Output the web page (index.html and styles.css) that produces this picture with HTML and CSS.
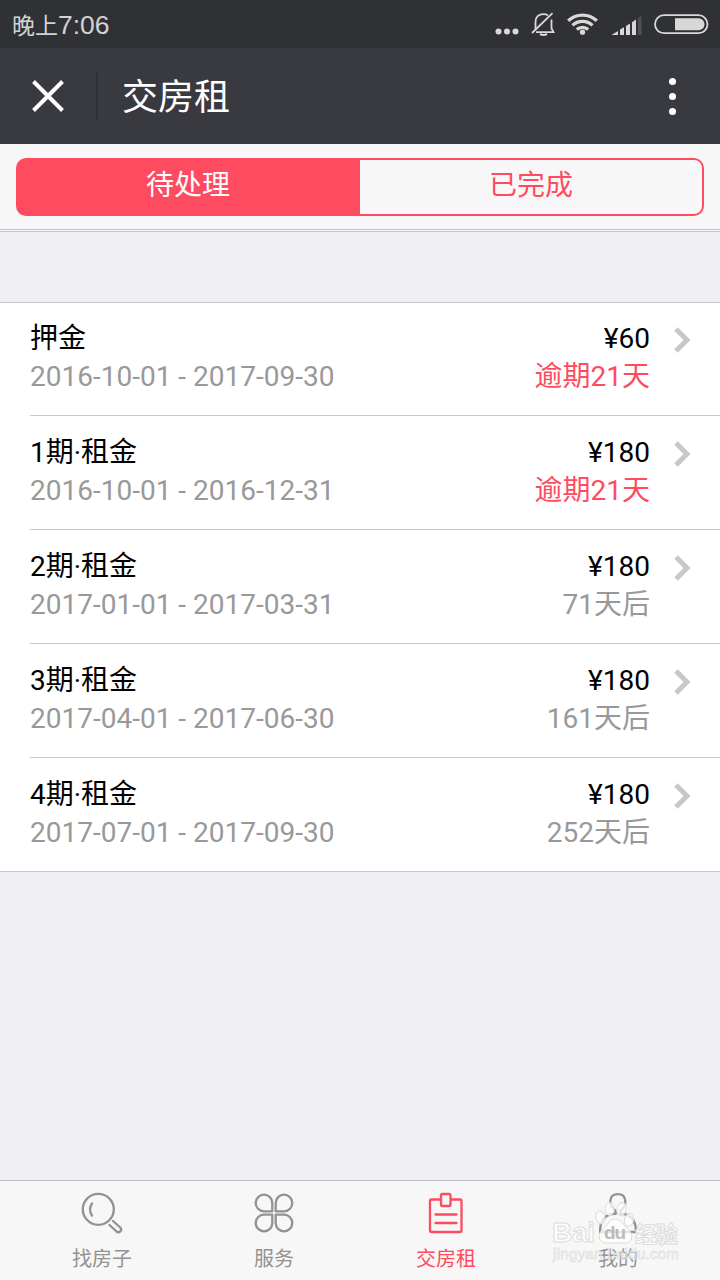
FILE: index.html
```html
<!DOCTYPE html>
<html lang="zh-CN">
  <head>
    <meta charset="UTF-8" />
    <meta name="viewport" content="width=device-width, initial-scale=1.0" />
    <title>交房租</title>
    <link rel="stylesheet" href="styles.css">
  </head>
  <body>
    <div class="status-bar">
      <div class="time"><span class="period">晚上</span>7:06</div>
      <svg class="status-icons" width="216" height="30" viewBox="0 0 216 30">
        <!-- more -->
        <g fill="#d8d8d8">
          <circle cx="2.5" cy="21.5" r="3" />
          <circle cx="11" cy="21.5" r="3" />
          <circle cx="19.5" cy="21.5" r="3" />
        </g>
        <!-- muted bell -->
        <g fill="none" stroke="#d8d8d8" stroke-width="1.8">
          <path d="M39.5 19.5V12C39.5 7 42.5 4.200 47.500 4.200Q50 4.200 52 5.500M55.500 9.500V18.500L57.500 22.200H40" />
          <path d="M36 23L56.500 3.200" />
          <path d="M44 24Q47.500 26 51 24" stroke-width="2.200" />
        </g>
        <!-- wifi -->
        <g fill="none" stroke="#d8d8d8" stroke-width="3.300">
          <path d="M72.200 10.700A21 21 0 0 1 100.800 10.700" />
          <path d="M76.500 15.400A14.500 14.500 0 0 1 96.500 15.400" />
          <path d="M80.800 19.500A8.500 8.500 0 0 1 92.200 19.500" />
          <circle cx="86.500" cy="22.200" r="2.600" fill="#d8d8d8" stroke="none" />
        </g>
        <!-- signal -->
        <g fill="#d8d8d8">
          <path d="M115.500 25L122 21V25ZM124 19.600L128 17.200V25H124ZM130 16L134 13.500V25H130ZM136 12.300L140 9.600V25H136Z" />
          <path d="M142 8.300L145.500 6V25H142Z" fill="#505154" />
        </g>
        <!-- battery -->
        <rect x="159" y="5.200" width="52.500" height="18" rx="9" fill="none" stroke="#d8d8d8" stroke-width="1.800" />
        <path d="M179 8.200H202.500A5.800 5.800 0 0 1 202.500 20.200H179Z" fill="#d8d8d8" />
      </svg>
    </div>

    <header class="nav-bar">
      <svg class="close" width="32" height="32" viewBox="0 0 32 32">
        <path d="M1.500 1.500L30.500 30.500M30.500 1.500L1.500 30.500" />
      </svg>
      <h1>交房租</h1>
      <div class="menu"><i></i><i></i><i></i></div>
    </header>

    <div class="tabs">
      <div class="segment">
        <a class="active">待处理</a>
        <a>已完成</a>
      </div>
    </div>

    <main>
      <ul class="bill-list">
        <li>
          <div class="info"><p>押金</p><p class="sub">2016-10-01 - 2017-09-30</p></div>
          <div class="amount"><p>¥60</p><p class="sub overdue">逾期21天</p></div>
          <svg class="arrow" viewBox="0 0 18 26"><path d="M2 2L13 13L2 24" /></svg>
        </li>
        <li>
          <div class="info"><p>1期·租金</p><p class="sub">2016-10-01 - 2016-12-31</p></div>
          <div class="amount"><p>¥180</p><p class="sub overdue">逾期21天</p></div>
          <svg class="arrow" viewBox="0 0 18 26"><path d="M2 2L13 13L2 24" /></svg>
        </li>
        <li>
          <div class="info"><p>2期·租金</p><p class="sub">2017-01-01 - 2017-03-31</p></div>
          <div class="amount"><p>¥180</p><p class="sub">71天后</p></div>
          <svg class="arrow" viewBox="0 0 18 26"><path d="M2 2L13 13L2 24" /></svg>
        </li>
        <li>
          <div class="info"><p>3期·租金</p><p class="sub">2017-04-01 - 2017-06-30</p></div>
          <div class="amount"><p>¥180</p><p class="sub">161天后</p></div>
          <svg class="arrow" viewBox="0 0 18 26"><path d="M2 2L13 13L2 24" /></svg>
        </li>
        <li>
          <div class="info"><p>4期·租金</p><p class="sub">2017-07-01 - 2017-09-30</p></div>
          <div class="amount"><p>¥180</p><p class="sub">252天后</p></div>
          <svg class="arrow" viewBox="0 0 18 26"><path d="M2 2L13 13L2 24" /></svg>
        </li>
      </ul>
    </main>

    <footer class="tab-bar">
      <a>
        <svg viewBox="0 0 44 44">
          <circle cx="18.300" cy="17.300" r="15.500" />
          <path d="M12 11.500Q8 17.500 12 23.500" />
          <path d="M29.500 33L36.500 39.500Q38.500 41 40.300 39.300T40.300 35.500L33 29" />
        </svg>
        <span>找房子</span>
      </a>
      <a>
        <svg viewBox="0 0 44 44">
          <path d="M20.300 19.300H11.800A8.300 8.300 0 1 1 20.300 11Z" />
          <path d="M23.700 19.300H32.200A8.300 8.300 0 1 0 23.700 11Z" />
          <path d="M20.300 22.700H11.800A8.300 8.300 0 1 0 20.300 31Z" />
          <path d="M23.700 22.700H32.200A8.300 8.300 0 1 1 23.700 31Z" />
        </svg>
        <span>服务</span>
      </a>
      <a class="active">
        <svg viewBox="0 0 44 44">
          <path d="M17 7.500H7.500Q6 7.500 6 9V38.500Q6 40 7.500 40H36Q37.500 40 37.500 38.500V9Q37.500 7.500 36 7.500H27" />
          <rect x="17" y="2" width="9.500" height="12" rx="1.500" />
          <path d="M11.500 22.500H32.500M11.500 31H32.500" />
        </svg>
        <span>交房租</span>
      </a>
      <a>
        <svg viewBox="0 0 44 44">
          <path d="M19.500 22V18.500C12 14 12.500 2.200 21.800 2.200S31.500 14 24.500 18.500V22" />
          <path d="M19.500 21.500C9 22 4 28 4 40H40C40 28 34 22 24.500 21.500" />
        </svg>
        <span>我的</span>
      </a>
      <svg class="watermark" width="140" height="80" viewBox="0 0 140 80">
        <g class="paw">
          <ellipse cx="50.500" cy="23.500" rx="4.500" ry="6.500" transform="rotate(-12 50.500 23.500)" />
          <ellipse cx="59.700" cy="15" rx="4.500" ry="6.500" />
          <ellipse cx="71.700" cy="15" rx="4.500" ry="6.500" transform="rotate(12 71.700 15)" />
          <ellipse cx="79" cy="26" rx="4.500" ry="6.500" transform="rotate(12 79 26)" />
          <path d="M65 25C71 25 73 31 78 35C84 40 83 49 75 49H56C48 49 47 40 53 35C58 31 59 25 65 25Z" />
        </g>
        <text x="2" y="48" font-size="28" textLength="43">Bai</text>
        <text class="du" x="54" y="45" font-size="19" textLength="22">du</text>
        <text x="85" y="47.500" font-size="22" textLength="43">经验</text>
        <text class="url" x="3" y="65" font-size="15" textLength="126">jingyan.baidu.com</text>
      </svg>
    </footer>
  </body>
</html>
```
FILE: styles.css
```css
* {
  box-sizing: border-box;
}

body {
  margin: 0;
  height: 1280px;
  display: flex;
  flex-direction: column;
  overflow: hidden;
  background-color: #efeff4;
  font-family: Roboto, "Noto Sans CJK SC", sans-serif;
  font-size: 28px;
  color: #000;
}

h1,
p,
ul {
  margin: 0;
  padding: 0;
}

.status-bar {
  height: 48px;
  padding: 0 8px 0 12px;
  display: flex;
  justify-content: space-between;
  background-color: #303135;
  color: #d3d3d3;
}

.time {
  font-family: "Liberation Sans", "Noto Sans CJK SC", sans-serif;
  font-size: 26.5px;
  line-height: 51px;
}

.period {
  font-size: 23px;
}

.status-icons {
  margin-top: 10px;
  width: 216px;
  overflow: visible;
}

.nav-bar {
  height: 96px;
  display: flex;
  align-items: center;
  background-color: #393a3f;
  color: #fff;
}

.close {
  margin: 0 32px;
  fill: none;
  stroke: #fff;
  stroke-width: 4;
}

h1 {
  flex: 1;
  height: 48px;
  padding-left: 24px;
  border-left: 2px solid #303135;
  font-size: 36px;
  font-weight: 400;
  line-height: 53px;
}

.menu {
  display: flex;
  flex-direction: column;
  gap: 8px;
  margin-right: 44px;
}

.menu i {
  width: 7px;
  height: 7px;
  border-radius: 50%;
  background-color: #fff;
}

.tabs {
  height: 88px;
  padding: 14px 16px 0;
  background-color: #f7f7f8;
  border-bottom: 3px double #c4c4c8;
}

.segment {
  display: flex;
  height: 58px;
}

.segment a {
  width: 50%;
  border: 2px solid #ff4b5f;
  border-left: none;
  border-radius: 0 10px 10px 0;
  text-align: center;
  line-height: 52px;
  color: #ff4b5f;
}

.segment .active {
  border: none;
  border-radius: 10px 0 0 10px;
  background-color: #ff4b5f;
  line-height: 56px;
  color: #fff;
}

main {
  flex: 1;
  padding-top: 70px;
}

.bill-list {
  list-style: none;
  background-color: #fff;
  border-top: 1px solid #c8c7cc;
  border-bottom: 1px solid #c8c7cc;
}

.bill-list li {
  display: flex;
  height: 114px;
  margin-left: 30px;
  padding: 18px 30px 0 0;
  border-bottom: 1px solid #c8c7cc;
  line-height: 38px;
}

.bill-list li:first-child {
  height: 113px;
  padding-top: 17px;
}

.bill-list li:last-child {
  height: 113px;
  border-bottom: none;
}

.info {
  flex: 1;
}

.amount {
  text-align: right;
}

.sub {
  color: #999;
}

.overdue {
  color: #ff4b5f;
}

.arrow {
  width: 18px;
  height: 26px;
  margin: 7px -2px 0 24px;
  fill: none;
  stroke: #c7c7cc;
  stroke-width: 5;
}

.tab-bar {
  position: relative;
  display: flex;
  height: 100px;
  padding: 0 16px;
  background-color: #f7f7f8;
  border-top: 1px solid #c0bfc6;
}

.tab-bar a {
  flex: 1;
  display: flex;
  flex-direction: column;
  align-items: center;
  padding-top: 11px;
  font-size: 20px;
  line-height: 28px;
  color: #929292;
}

.tab-bar a svg {
  width: 44px;
  height: 44px;
  margin-bottom: 9px;
  fill: none;
  stroke: currentColor;
  stroke-width: 2.3;
  stroke-linejoin: round;
  stroke-linecap: round;
}

.tab-bar .active {
  color: #ff4b5f;
}

.watermark {
  position: absolute;
  left: 550px;
  top: 13px;
  font-family: "Liberation Sans", "Noto Sans CJK SC", sans-serif;
  font-weight: bold;
  fill: #fff;
  fill-opacity: 0.75;
  stroke: #dcdcdc;
  stroke-width: 1;
}

.watermark .du {
  fill: #bbb;
  fill-opacity: 1;
  stroke: none;
}

.watermark .url {
  font-weight: normal;
  fill-opacity: 0.3;
  stroke-opacity: 0.7;
}
```
